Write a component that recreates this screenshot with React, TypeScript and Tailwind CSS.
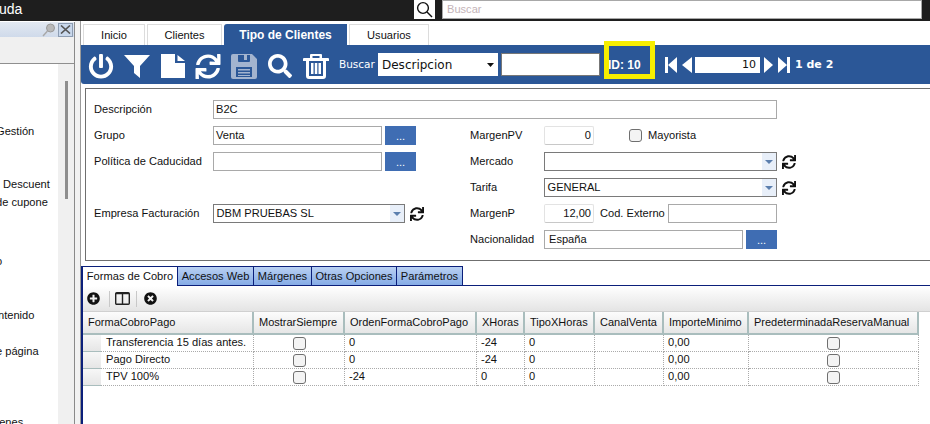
import React from "react";
import { FaPowerOff, FaSync, FaSearch, FaPlusCircle, FaTimesCircle } from "react-icons/fa";

const tabs = [
  { t: "Inicio", w: "w-[62px]" },
  { t: "Clientes", w: "w-[75px]" },
  { t: "Tipo de Clientes", w: "w-[123px]", active: true },
  { t: "Usuarios", w: "w-[80px]" },
];

const subTabs = [
  { t: "Formas de Cobro", w: "w-[95px]", active: true },
  { t: "Accesos Web", w: "w-[76px]" },
  { t: "Márgenes", w: "w-[58px]" },
  { t: "Otras Opciones", w: "w-[85px]" },
  { t: "Parámetros", w: "w-[66px]" },
];

const sideItems = [
  { t: "Gestión", c: "mt-[58px] -ml-[4px]" },
  { t: "Descuent", c: "mt-[35px] ml-[3px]" },
  { t: "de cupone", c: "mt-[0px] -ml-[4px]" },
  { t: "o", c: "mt-[41px] -ml-[4px]" },
  { t: "ntenido", c: "mt-[36px] -ml-[2px]" },
  { t: "e página", c: "mt-[18px] -ml-[4px]" },
  { t: "uenes", c: "mt-[53px] -ml-[7px]" },
];

const cols = [
  { t: "FormaCobroPago", w: "w-[171px]" },
  { t: "MostrarSiempre", w: "w-[91px]" },
  { t: "OrdenFormaCobroPago", w: "w-[132px]" },
  { t: "XHoras", w: "w-[48px]" },
  { t: "TipoXHoras", w: "w-[70px]" },
  { t: "CanalVenta", w: "w-[69px]" },
  { t: "ImporteMinimo", w: "w-[85px]" },
  { t: "PredeterminadaReservaManual", w: "w-[170px]" },
];

const rows = [
  ["Transferencia 15 días antes.", "0", "-24", "0", "0,00"],
  ["Pago Directo", "0", "-24", "0", "0,00"],
  ["TPV 100%", "-24", "0", "0", "0,00"],
];

function Field({ value = "", w, pad = "pl-[2px]" }: { value?: string; w: string; pad?: string }) {
  return (
    <div className={`${w} ${pad} h-[19px] border border-[#a9a9a9] bg-white flex items-center text-[11.1px] text-[#111]`}>
      {value}
    </div>
  );
}

function Num({ value }: { value: string }) {
  return (
    <div className="w-[50px] h-[19px] border border-[#e3e3e3] border-b-[#c8c8c8] rounded-[2px] bg-white px-[2px] flex items-center justify-end text-[11.1px] text-[#111]">
      {value}
    </div>
  );
}

function Dots() {
  return (
    <button className="w-[31px] h-[19px] bg-[#3f6db3] text-white text-[11.1px] leading-[19px] flex items-center justify-center pt-[2px]">...</button>
  );
}

function Combo({ value = "", w }: { value?: string; w: string }) {
  return (
    <div className={`${w} h-[19px] border border-[#7a7a7a] bg-white flex items-center text-[11.1px] text-[#111]`}>
      <span className="flex-1 pl-[2.5px] whitespace-nowrap">{value}</span>
      <span className="w-[14px] h-[17px] bg-[#e8eff9] flex items-center justify-center">
        <svg width="8" height="4" viewBox="0 0 8 4"><path d="M0 0h8L4 4z" fill="#5b7fae" /></svg>
      </span>
    </div>
  );
}

function Refresh() {
  return <FaSync className="w-[14px] h-[14px] text-[#111]" />;
}

function Check() {
  return <span className="block w-[13px] h-[13px] rounded-[3px] border border-[#6f6f6f] bg-[#f4f4f4]" />;
}

function Row({ children }: { children: React.ReactNode }) {
  return <div className="h-[26px] flex items-start">{children}</div>;
}

function Label({ t, w }: { t: string; w: string }) {
  return <span className={`${w} shrink-0 h-[19px] flex items-center text-[11.1px] text-[#111] whitespace-nowrap`}>{t}</span>;
}

export default function App() {
  return (
    <div className="w-[930px] h-[424px] overflow-hidden bg-white flex flex-col [font-family:Liberation_Sans,Arial,sans-serif]">
      {/* top bar */}
      <div className="h-[21px] shrink-0 bg-[#1e1e1e] flex">
        <span className="w-[415px] text-white text-[14px] leading-[18px] -ml-[1px]">uda</span>
        <div className="w-[21px] h-[19px] bg-white flex items-center justify-center">
          <svg width="17" height="17" viewBox="0 0 17 17" fill="none" stroke="#111" strokeWidth="1.4">
            <circle cx="7" cy="7" r="5.4" />
            <path d="M11 11l5 5" />
          </svg>
        </div>
        <div className="ml-[7px] w-[480px] h-[19px] bg-white border border-[#a8a8a8] px-[4px] flex items-center text-[11.1px] text-[#c4b4b8]">Buscar</div>
      </div>

      <div className="flex-1 flex min-h-0">
        {/* sidebar */}
        <div className="w-[75px] shrink-0 flex flex-col border-r border-[#8a8a8a] mt-[1px]">
          <div className="h-[15px] bg-gradient-to-b from-[#e3e9f2] to-[#cfdaea] flex items-center justify-end pr-[1px] gap-[2px] shrink-0">
            <svg width="14" height="14" viewBox="0 0 14 14">
              <circle cx="8.5" cy="5" r="4" fill="#b9b9b9" stroke="#9a9a9a" />
              <path d="M5.5 8L1 13" stroke="#a8a8a8" strokeWidth="1.4" />
            </svg>
            <span className="w-[15px] h-[14px] bg-[#c9d8ec] border border-[#8d9db3] flex items-center justify-center">
              <svg width="11" height="9" viewBox="0 0 11 9"><path d="M1 0.5l9 8M10 0.5l-9 8" stroke="#555" strokeWidth="1.6" /></svg>
            </span>
          </div>
          <div className="h-[27px] bg-[#f0f0f0] border-b border-[#8f8f8f] shrink-0" />
          <div className="flex-1 flex min-h-0 overflow-hidden">
            <div className="w-[58px] shrink-0 bg-white overflow-hidden whitespace-nowrap text-[11.1px] leading-[18px] text-[#111]">
              {sideItems.map((s) => (
                <div key={s.t} className={s.c}>{s.t}</div>
              ))}
            </div>
            <div className="flex-1 bg-[#f0f0f0] flex justify-center pt-[17px]">
              <span className="w-[3px] h-[118px] bg-[#8e8e8e]" />
            </div>
          </div>
        </div>
        <div className="w-[6px] shrink-0 bg-[#f2f2f2] border-r border-[#9a9a9a]" />

        {/* main */}
        <div className="flex-1 min-w-0 flex flex-col">
          <div className="h-[24px] shrink-0 flex items-end gap-[2px] pl-[2px]">
            {tabs.map((t) => (
              <div
                key={t.t}
                className={`${t.w} h-[21px] flex items-center justify-center ${
                  t.active
                    ? "bg-[#2b5797] text-white font-bold rounded-tl-[3px] text-[12px]"
                    : "bg-white border border-b-0 border-[#dcdcdc] text-[#111] text-[11.1px]"
                }`}
              >
                {t.t}
              </div>
            ))}
          </div>

          <div className="h-[39px] shrink-0 bg-[#2b5797] flex items-center text-white rounded-bl-[3px] relative">
            <div className="ml-[7px] mt-[3px] flex items-center gap-[10px]">
              <FaPowerOff className="w-[26px] h-[25px]" />
              <svg className="w-[26px] h-[23px]" viewBox="0 0 26 23" fill="#fff">
                <path d="M0 0h26L16 11v12l-6-5V11z" />
              </svg>
              <svg className="w-[24px] h-[24px] ml-[1px]" viewBox="0 0 24 24" fill="#fff">
                <path d="M0 0h14v9h10v15H0zM16.5 1L24 7h-7.5z" />
              </svg>
              <FaSync className="w-[26px] h-[25px]" />
              <svg className="w-[26px] h-[25px]" viewBox="0 0 26 25" fill="#a3b4cf">
                <path fillRule="evenodd" d="M2 0h19l5 5v18a2 2 0 0 1-2 2H2a2 2 0 0 1-2-2V2a2 2 0 0 1 2-2zM7 1v6a1 1 0 0 0 1 1h10a1 1 0 0 0 1-1V1h-3v5h-3V1zM5 13v10h16V13zM7 15h12v1.5H7zM7 18h12v1.5H7zM7 21h12v1H7z" />
              </svg>
              <FaSearch className="w-[26px] h-[24px]" />
              <svg className="w-[26px] h-[25px]" viewBox="0 0 26 25" fill="#fff">
                <path fillRule="evenodd" d="M8 0h10a1 1 0 0 1 1 1v3h6a1 1 0 0 1 1 1v2h-3v15a3 3 0 0 1-3 3H6a3 3 0 0 1-3-3V7H0V5a1 1 0 0 1 1-1h6V1a1 1 0 0 1 1-1zM9.5 2v2h7V2zM6 7v15h14V7z" />
                <path d="M8 9h2.5v11H8zM11.8 9h2.5v11h-2.5zM15.5 9H18v11h-2.5z" />
              </svg>
            </div>
            <span className="ml-[10px] w-[39px] [font-family:DejaVu_Sans,sans-serif] text-[10.5px]">Buscar</span>
            <div className="w-[120px] h-[23px] bg-white flex items-center text-[#111] text-[12px] [font-family:DejaVu_Sans,sans-serif] pl-[4px] pr-[4px]">
              <span className="flex-1">Descripcion</span>
              <svg width="7" height="4" viewBox="0 0 7 4"><path d="M0 0h7L3.5 4z" fill="#111" /></svg>
            </div>
            <div className="ml-[3px] w-[99px] h-[23px] bg-white border border-[#777]" />
            <div className="ml-[8px] w-[57px] text-[12px] font-bold relative">
              ID: 10
              <div className="absolute -left-[4px] top-[-15px] w-[51px] h-[38px] border-[5px] border-[#f7ee00]" />
            </div>
            <div className="flex items-center h-[16px] mt-[1px]">
              <svg width="12" height="16" viewBox="0 0 12 16" fill="#fff"><path d="M0 0h3v16H0zM12 0v16L3 8z" /></svg>
              <svg className="ml-[5px]" width="10" height="16" viewBox="0 0 10 16" fill="#fff"><path d="M10 0v16L0 8z" /></svg>
              <div className="ml-[3px] w-[65px] h-[16px] bg-white text-[#111] [font-family:DejaVu_Sans,sans-serif] text-[11px] flex items-center justify-end pr-[4px]">10</div>
              <svg className="ml-[4px]" width="9" height="16" viewBox="0 0 9 16" fill="#fff"><path d="M0 0v16l9-8z" /></svg>
              <svg className="ml-[5px]" width="12" height="16" viewBox="0 0 12 16" fill="#fff"><path d="M9 0h3v16H9zM0 0v16l9-8z" /></svg>
              <span className="ml-[5px] text-[11px] font-bold [font-family:DejaVu_Sans,sans-serif] whitespace-nowrap">1 de 2</span>
            </div>
          </div>

          {/* form */}
          <div className="mt-[4px] ml-[4px] h-[173px] shrink-0 border border-r-0 border-[#6f6f6f] pl-[8px] pt-[11px] text-[#111]">
            <Row>
              <Label t="Descripción" w="w-[119px]" />
              <Field value="B2C" w="w-[564px]" />
            </Row>
            <div className="flex">
              <div className="w-[376px] shrink-0">
                <Row>
                  <Label t="Grupo" w="w-[119px]" />
                  <Field value="Venta" w="w-[169px]" />
                  <span className="ml-[3px]"><Dots /></span>
                </Row>
                <Row>
                  <Label t="Política de Caducidad" w="w-[119px]" />
                  <Field w="w-[169px]" />
                  <span className="ml-[3px]"><Dots /></span>
                </Row>
                <Row><span /></Row>
                <Row>
                  <Label t="Empresa Facturación" w="w-[119px]" />
                  <Combo value="DBM PRUEBAS SL" w="w-[192px]" />
                  <span className="ml-[5px] h-[19px] flex items-center"><Refresh /></span>
                </Row>
              </div>
              <div className="flex-1">
                <Row>
                  <Label t="MargenPV" w="w-[74px]" />
                  <Num value="0" />
                  <span className="ml-[35px] h-[19px] flex items-center"><Check /></span>
                  <span className="ml-[6px] h-[19px] flex items-center text-[11.1px]">Mayorista</span>
                </Row>
                <Row>
                  <Label t="Mercado" w="w-[74px]" />
                  <Combo w="w-[233px]" />
                  <span className="ml-[5px] h-[19px] flex items-center"><Refresh /></span>
                </Row>
                <Row>
                  <Label t="Tarifa" w="w-[74px]" />
                  <Combo value="GENERAL" w="w-[233px]" />
                  <span className="ml-[5px] h-[19px] flex items-center"><Refresh /></span>
                </Row>
                <Row>
                  <Label t="MargenP" w="w-[74px]" />
                  <Num value="12,00" />
                  <span className="ml-[6px] w-[68px] h-[19px] flex items-center text-[11.1px] whitespace-nowrap">Cod. Externo</span>
                  <Field w="w-[109px]" />
                </Row>
                <Row>
                  <Label t="Nacionalidad" w="w-[74px]" />
                  <Field value="España" w="w-[199px]" pad="pl-[4px]" />
                  <span className="ml-[3px]"><Dots /></span>
                </Row>
              </div>
            </div>
          </div>

          {/* sub tabs */}
          <div className="mt-[5px] flex-1 min-h-0 flex flex-col border-l-2 border-[#0b1f7a]">
            <div className="h-[20px] shrink-0 flex">
              {subTabs.map((s) => (
                <div
                  key={s.t}
                  className={`${s.w} flex items-center justify-center text-[11.1px] text-[#111] whitespace-nowrap border-t border-r border-[#0b1f7a] ${
                    s.active ? "bg-white" : "bg-gradient-to-b from-[#b9d0f2] to-[#86ace6] border-b"
                  }`}
                >
                  {s.t}
                </div>
              ))}
              <div className="flex-1 border-b border-[#0b1f7a]" />
            </div>
            <div className="h-[26px] shrink-0 bg-gradient-to-b from-[#ffffff] to-[#e4e4e4] flex items-center pl-[4px] border-b border-[#d0d0d0]">
              <FaPlusCircle className="w-[13px] h-[13px] text-[#111]" />
              <span className="ml-[9px] w-px h-[16px] bg-[#c8c8c8]" />
              <svg className="ml-[5px]" width="15" height="13" viewBox="0 0 15 13" fill="none" stroke="#222" strokeWidth="1.4">
                <rect x="0.7" y="0.7" width="13.6" height="11.6" rx="1" />
                <path d="M7.5 1v11M1 1.6h13" />
              </svg>
              <span className="ml-[6px] w-px h-[16px] bg-[#c8c8c8]" />
              <FaTimesCircle className="ml-[7px] w-[13px] h-[13px] text-[#111]" />
            </div>
            <div className="h-[23px] shrink-0 flex">
              {cols.map((c) => (
                <div
                  key={c.t}
                  className={`${c.w} shrink-0 flex items-center pl-[5px] text-[11px] text-[#111] whitespace-nowrap bg-gradient-to-b from-[#fcfcfc] to-[#e6e6e6] border-r-2 border-b-2 border-[#a9bdbd] overflow-hidden`}
                >
                  {c.t}
                </div>
              ))}
            </div>
            {rows.map((r) => (
              <div key={r[0]} className="h-[17px] shrink-0 flex text-[11.1px] text-[#111] whitespace-nowrap">
                <div className="w-[18px] shrink-0 bg-gradient-to-b from-[#f7f7f7] to-[#e6e6e6] border-b border-[#a9bdbd]" />
                <div className="w-[153px] shrink-0 pl-[5px] border-r border-b border-dotted border-[#aaa] leading-[15px]">{r[0]}</div>
                <div className="w-[91px] shrink-0 flex justify-center items-center border-r border-b border-dotted border-[#aaa]"><Check /></div>
                <div className="w-[132px] shrink-0 pl-[4px] border-r border-b border-dotted border-[#aaa] leading-[15px]">{r[1]}</div>
                <div className="w-[48px] shrink-0 pl-[4px] border-r border-b border-dotted border-[#aaa] leading-[15px]">{r[2]}</div>
                <div className="w-[70px] shrink-0 pl-[4px] border-r border-b border-dotted border-[#aaa] leading-[15px]">{r[3]}</div>
                <div className="w-[69px] shrink-0 border-r border-b border-dotted border-[#aaa]" />
                <div className="w-[85px] shrink-0 pl-[4px] border-r border-b border-dotted border-[#aaa] leading-[15px]">{r[4]}</div>
                <div className="w-[170px] shrink-0 flex justify-center items-center border-r border-b border-dotted border-[#aaa]"><Check /></div>
              </div>
            ))}
          </div>
        </div>
      </div>
    </div>
  );
}
